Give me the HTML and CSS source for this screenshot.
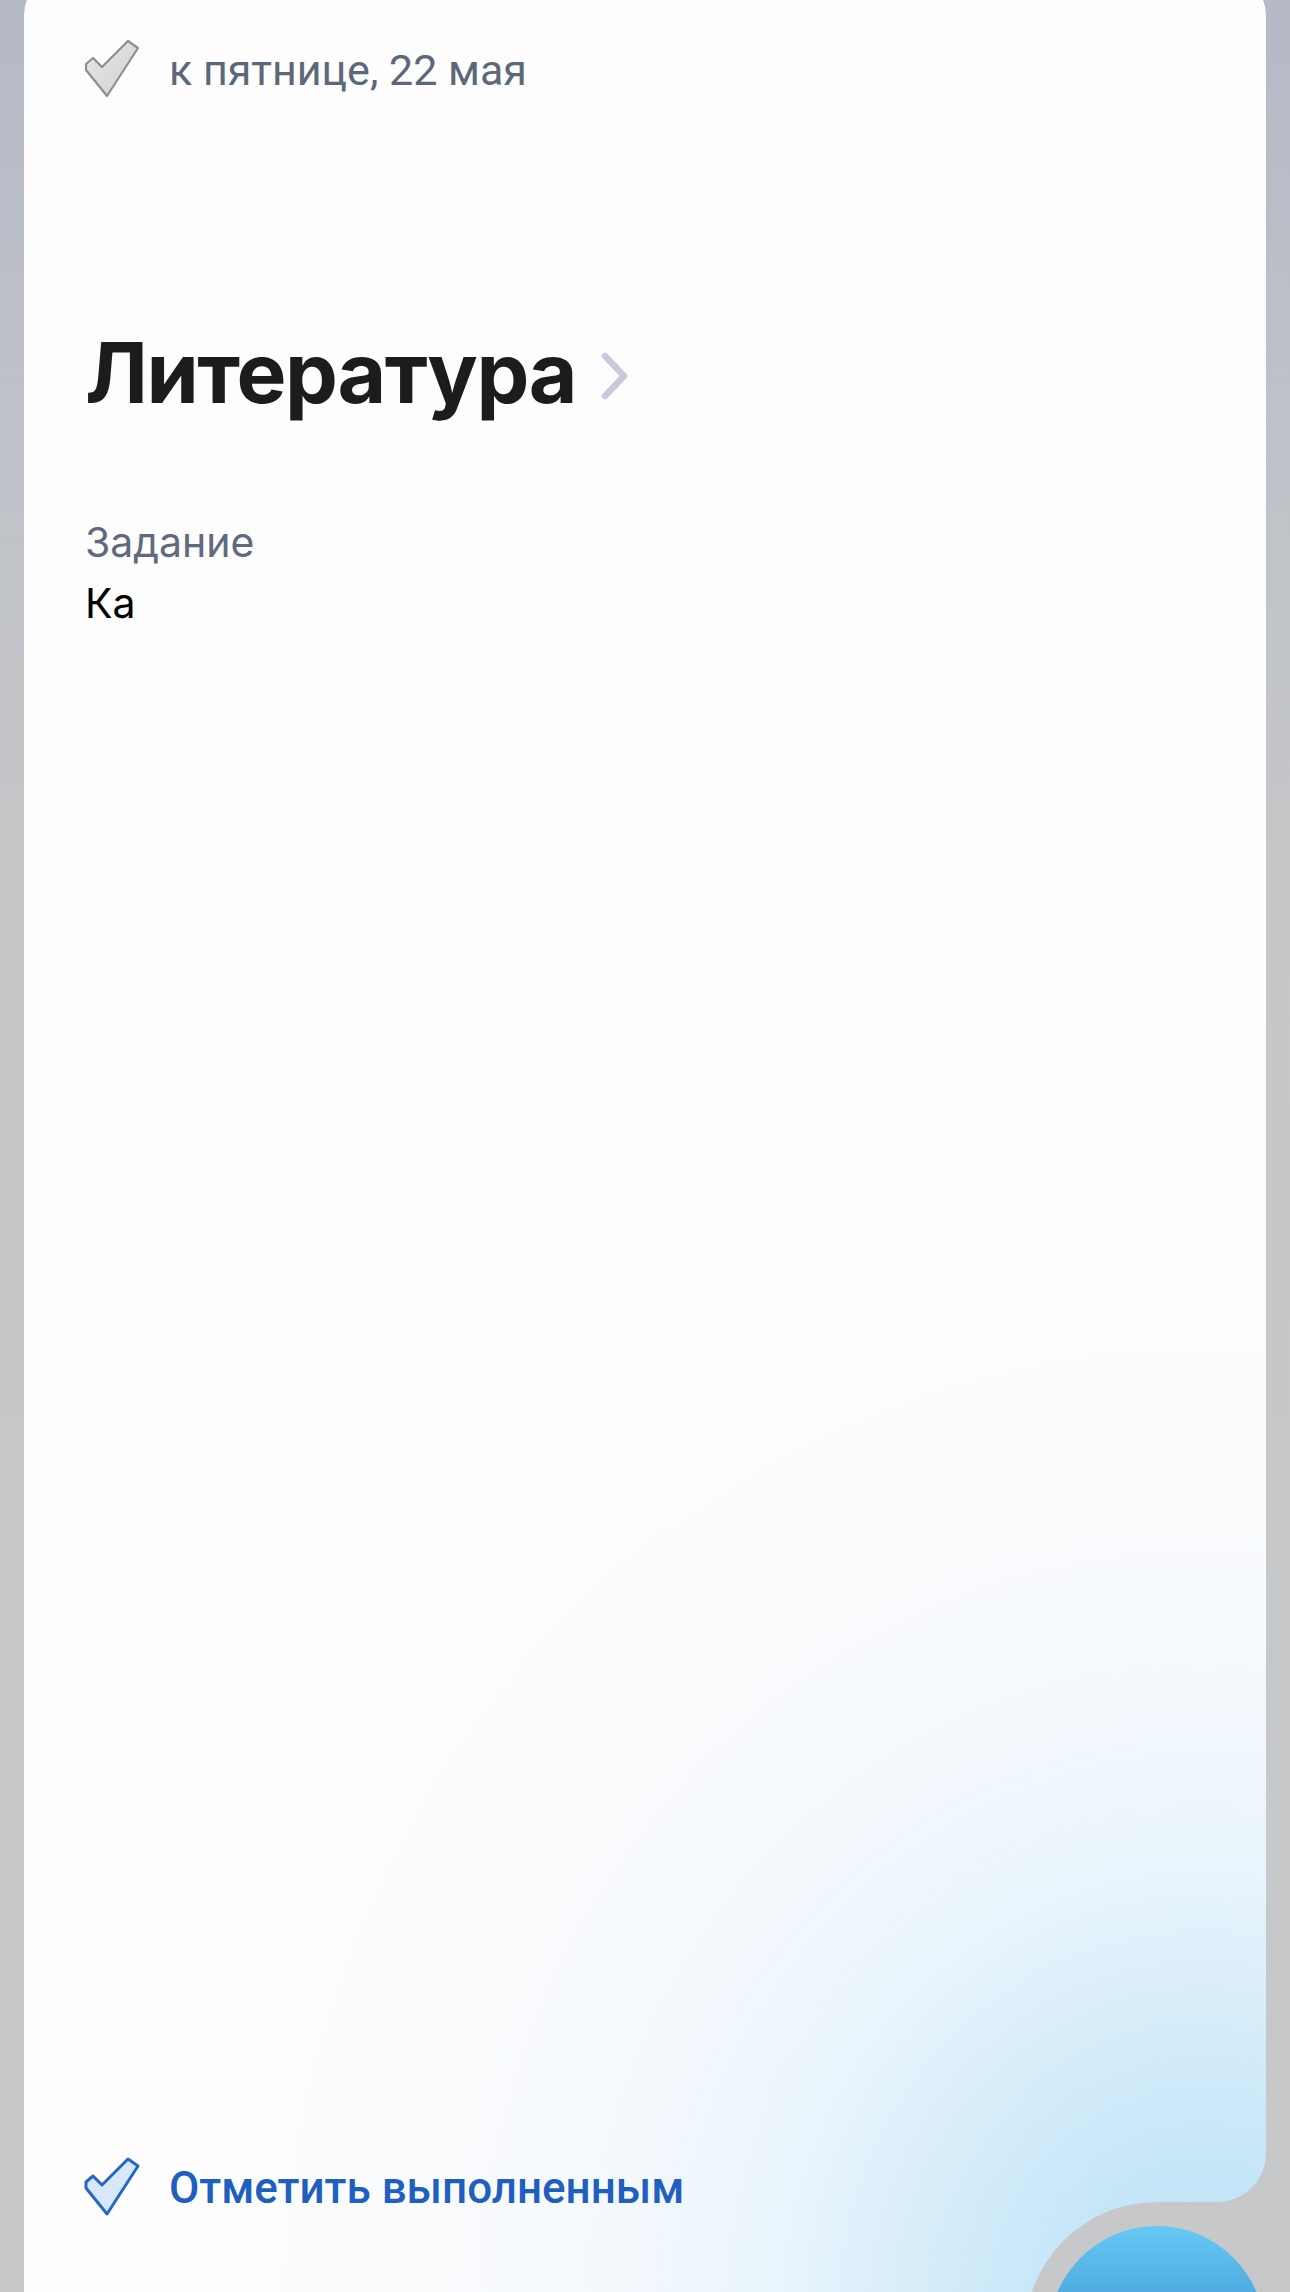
FILE: index.html
```html
<!DOCTYPE html>
<html lang="ru">
<head>
<meta charset="utf-8">
<title>Литература</title>
<link rel="stylesheet" href="styles.css">
</head>
<body>
<div class="card">
  <div class="due">
    <svg class="check" viewBox="0 0 64 62" width="64" height="62">
      <defs>
        <linearGradient id="gg" x1="0" y1="0" x2="1" y2="1">
          <stop offset="0" stop-color="#e9e9e9"/>
          <stop offset="1" stop-color="#cfcfcf"/>
        </linearGradient>
      </defs>
      <polygon points="6,25 13,19 22,28 48,2 58,9 27,57 6,31" fill="url(#gg)" stroke="#8f8f8f" stroke-width="2.2" stroke-linejoin="round"/>
    </svg>
    <span class="due-text">к пятнице, 22 мая</span>
  </div>

  <h1 class="title">Литература<svg class="chev" viewBox="0 0 30 50" width="30" height="50"><path d="M5 5 L24 25 L5 45" fill="none" stroke="#c8c9dc" stroke-width="6.5" stroke-linecap="round" stroke-linejoin="round"/></svg></h1>

  <div class="label">Задание</div>
  <div class="body-text">Ка</div>

  <div class="done">
    <svg class="check" viewBox="0 0 64 62" width="64" height="62">
      <polygon points="6,25 13,19 22,28 48,2 58,9 27,57 6,31" fill="#d9e8f8" stroke="#2467c6" stroke-width="3" stroke-linejoin="round"/>
    </svg>
    <span class="done-text">Отметить выполненным</span>
  </div>

  <div class="notch"></div>
  <div class="notch-corner"></div>
  <div class="fab-ring"><div class="fab"></div></div>
</div>
</body>
</html>
```

FILE: styles.css
```css
html, body {
  height: 100%;
}
body {
  margin: 0;
  overflow: hidden;
  background: linear-gradient(180deg, #b5b9c6 0px, #bec1c8 400px, #c5c7c8 900px, #c6c8c9 100%);
}
.card {
  position: relative;
  box-sizing: border-box;
  margin: -25px 24px 0 24px;
  height: calc(100% + 25px);
  border-radius: 40px 40px 0 0;
  overflow: hidden;
  display: flex;
  flex-direction: column;
  padding: 65px 0 74px 61px;
  background:
    radial-gradient(ellipse 1000px 1050px at 1180px 2340px, rgba(184, 224, 246, 1) 0%, rgba(198, 230, 248, 0.9) 20%, rgba(220, 238, 251, 0.62) 42%, rgba(236, 245, 253, 0.35) 65%, rgba(255, 255, 255, 0) 100%),
    #fdfdfd;
}
.due, .done {
  display: flex;
  align-items: center;
  height: 60px;
}
.check {
  display: block;
  width: 64px;
  height: 62px;
  margin-left: -5px;
  margin-right: 25px;
  flex: none;
}
.due-text {
  font-family: Roboto, "Liberation Sans", sans-serif;
  font-size: 43px;
  line-height: 60px;
  color: #5c677a;
}
.title {
  margin: 222px 0 0 0;
  font-family: Inter, "Liberation Sans", sans-serif;
  font-weight: 700;
  font-size: 84px;
  line-height: 102px;
  color: #1c1c1e;
  display: flex;
  align-items: center;
  letter-spacing: -1.5px;
}
.chev {
  display: block;
  width: 30px;
  height: 50px;
  margin-left: 24px;
  margin-top: 6px;
}
.label {
  margin-top: 92px;
  font-family: Inter, "Liberation Sans", sans-serif;
  font-size: 41px;
  line-height: 52px;
  color: #5f6a7e;
}
.body-text {
  margin-top: 9px;
  font-family: Inter, "Liberation Sans", sans-serif;
  font-size: 41px;
  line-height: 52px;
  color: #000;
}
.done {
  margin-top: auto;
}
.done-text {
  font-family: Roboto, "Liberation Sans", sans-serif;
  font-weight: 500;
  font-size: 44px;
  line-height: 60px;
  color: #1f5fc0;
}
.notch {
  position: absolute;
  right: 0;
  bottom: 0;
  width: 109px;
  height: 90px;
  background: #c6c8c9;
}
.notch-corner {
  position: absolute;
  right: 0;
  bottom: 90px;
  width: 48px;
  height: 48px;
  background: radial-gradient(circle at 0 0, rgba(198, 200, 201, 0) 47px, #c6c8c9 48.5px);
}
.fab-ring {
  position: absolute;
  right: -23px;
  bottom: -174px;
  width: 264px;
  height: 264px;
  border-radius: 50%;
  background: #c6c8c9;
  display: flex;
  align-items: center;
  justify-content: center;
}
.fab {
  width: 216px;
  height: 216px;
  border-radius: 50%;
  background: linear-gradient(180deg, #66c8f5 0%, #4ea9df 35%, #3f8fd2 100%);
}
```
